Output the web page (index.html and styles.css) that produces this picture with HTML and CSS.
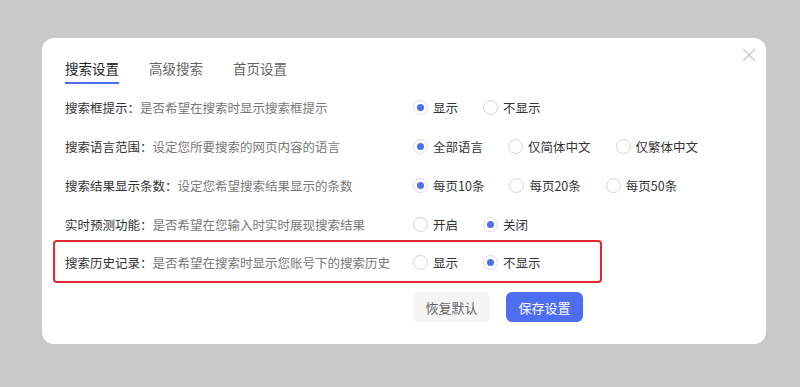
FILE: index.html
```html
<!DOCTYPE html>
<html lang="zh-CN">
<head>
<meta charset="utf-8">
<title>搜索设置</title>
<link rel="stylesheet" href="styles.css">
</head>
<body>
<div class="dialog">
  <svg class="close" width="14" height="14" viewBox="0 0 14 14"><path d="M1 1 L13 13 M13 1 L1 13" stroke="#c8c8c8" stroke-width="1.3" fill="none"/></svg>
  <div class="tabs">
    <div class="tab active">搜索设置</div>
    <div class="tab">高级搜索</div>
    <div class="tab">首页设置</div>
  </div>
  <div class="rows">
    <div class="row">
      <div class="label"><span class="name">搜索框提示：</span><span class="desc">是否希望在搜索时显示搜索框提示</span></div>
      <div class="opts">
        <span class="opt"><i class="radio on"></i>显示</span>
        <span class="opt"><i class="radio"></i>不显示</span>
      </div>
    </div>
    <div class="row">
      <div class="label"><span class="name">搜索语言范围：</span><span class="desc">设定您所要搜索的网页内容的语言</span></div>
      <div class="opts">
        <span class="opt"><i class="radio on"></i>全部语言</span>
        <span class="opt"><i class="radio"></i>仅简体中文</span>
        <span class="opt"><i class="radio"></i>仅繁体中文</span>
      </div>
    </div>
    <div class="row">
      <div class="label"><span class="name">搜索结果显示条数：</span><span class="desc">设定您希望搜索结果显示的条数</span></div>
      <div class="opts">
        <span class="opt"><i class="radio on"></i>每页10条</span>
        <span class="opt"><i class="radio"></i>每页20条</span>
        <span class="opt"><i class="radio"></i>每页50条</span>
      </div>
    </div>
    <div class="row">
      <div class="label"><span class="name">实时预测功能：</span><span class="desc">是否希望在您输入时实时展现搜索结果</span></div>
      <div class="opts">
        <span class="opt"><i class="radio"></i>开启</span>
        <span class="opt"><i class="radio on"></i>关闭</span>
      </div>
    </div>
    <div class="row marked">
      <div class="highlight"></div>
      <div class="label"><span class="name">搜索历史记录：</span><span class="desc">是否希望在搜索时显示您账号下的搜索历史</span></div>
      <div class="opts">
        <span class="opt"><i class="radio"></i>显示</span>
        <span class="opt"><i class="radio on"></i>不显示</span>
      </div>
    </div>
  </div>
  <div class="actions">
    <button class="btn btn-default">恢复默认</button>
    <button class="btn btn-primary">保存设置</button>
  </div>
</div>
</body>
</html>
```

FILE: styles.css
```css
html, body {
  margin: 0;
  padding: 0;
}
body {
  background: #c9c9c9;
  width: 800px;
  height: 387px;
  overflow: hidden;
  font-family: "Noto Sans CJK SC", "Noto Sans", sans-serif;
  padding-top: 38px;
  box-sizing: border-box;
}
.dialog {
  position: relative;
  margin-left: 42px;
  width: 724px;
  height: 306px;
  background: #fff;
  border-radius: 12px;
  box-sizing: border-box;
  padding: 20px 23px 0 23px;
}
.close {
  position: absolute;
  right: 10px;
  top: 10px;
}
.tabs {
  display: flex;
  gap: 30px;
}
.tab {
  font-size: 13.5px;
  line-height: 20px;
  color: #666;
  padding-bottom: 4px;
  border-bottom: 2px solid transparent;
}
.tab.active {
  color: #222;
  border-bottom-color: #4e6ef2;
}
.rows {
  margin-top: 4.5px;
}
.row {
  display: flex;
  align-items: center;
  height: 38.75px;
  font-size: 12.5px;
}
.label {
  width: 348px;
  flex: none;
  white-space: nowrap;
}
.name {
  color: #333;
}
.desc {
  color: #777;
}
.opts {
  display: flex;
  align-items: center;
}
.opt {
  display: flex;
  align-items: center;
  color: #333;
  margin-right: 25px;
  white-space: nowrap;
}
.radio {
  width: 15px;
  height: 15px;
  box-sizing: border-box;
  border: 1px solid #d4d4d4;
  border-radius: 50%;
  margin-right: 5px;
  display: flex;
  align-items: center;
  justify-content: center;
  background: #fff;
}
.radio.on {
  border-color: #d7dcf0;
}
.radio.on::after {
  content: "";
  width: 7px;
  height: 7px;
  border-radius: 50%;
  background: #4e6ef2;
}
.marked {
  position: relative;
}
.highlight {
  position: absolute;
  left: -12px;
  top: -3.5px;
  width: 549px;
  height: 43px;
  box-sizing: border-box;
  border: 2px solid #e3262b;
  border-radius: 4px;
}
.actions {
  display: flex;
  gap: 16px;
  margin-top: 10px;
  padding-left: 348px;
}
.btn {
  font-family: inherit;
  font-size: 13px;
  height: 30px;
  width: 77px;
  border: none;
  border-radius: 6px;
  padding: 0;
}
.btn-default {
  background: #f5f5f6;
  color: #666;
}
.btn-primary {
  background: #4e6ef2;
  color: #fff;
}
```
